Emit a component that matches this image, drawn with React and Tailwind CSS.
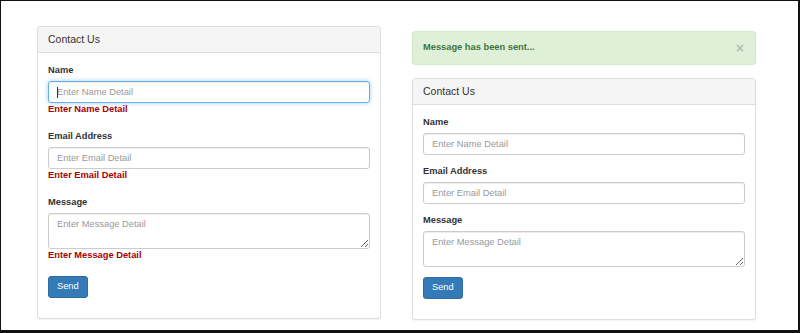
import React from 'react';

const font = { fontFamily: '"Liberation Sans", Arial, sans-serif' };

const Field = ({ label, placeholder, error, focused, multiline }) => (
  <div className={error ? 'mb-[14px]' : 'mb-[10px]'}>
    <label className="block text-[9.3px] leading-[13px] font-bold text-[#333] mb-[4px]">{label}</label>
    {multiline ? (
      <textarea
        placeholder={placeholder}
        className="block w-full h-[36px] px-[8px] py-[4px] text-[9.3px] leading-[13px] text-[#555] bg-white border border-[#ccc] rounded-[3px] shadow-[inset_0_1px_1px_rgba(0,0,0,0.075)] placeholder:text-[#999] outline-none"
      />
    ) : (
      <div className="relative">
        <input
          type="text"
          placeholder={placeholder}
          className={
            focused
              ? 'block w-full h-[22px] px-[8px] text-[9.3px] text-[#555] bg-white border border-[#66afe9] rounded-[3px] shadow-[inset_0_1px_1px_rgba(0,0,0,0.075),0_0_5px_rgba(102,175,233,0.6)] placeholder:text-[#999] outline-none'
              : 'block w-full h-[22px] px-[8px] text-[9.3px] text-[#555] bg-white border border-[#ccc] rounded-[3px] shadow-[inset_0_1px_1px_rgba(0,0,0,0.075)] placeholder:text-[#999] outline-none'
          }
        />
        {focused && <span className="absolute left-[9px] top-[6px] w-px h-[11px] bg-[#333]" />}
      </div>
    )}
    {error && <div className="text-[9.3px] leading-[13px] font-bold text-[#a80000]">{error}</div>}
  </div>
);

const ContactPanel = ({ errors }) => (
  <div className="w-[344px] bg-white border border-[#ddd] rounded-[3px] shadow-[0_1px_1px_rgba(0,0,0,0.05)]">
    <div className="h-[26px] px-[10px] flex items-center bg-[#f5f5f5] border-b border-[#ddd] rounded-t-[3px] text-[10.5px] text-[#333]">
      Contact Us
    </div>
    <div className="px-[10px] pt-[11px] pb-[20px]">
      <Field label="Name" placeholder="Enter Name Detail" error={errors && 'Enter Name Detail'} focused={errors} />
      <Field label="Email Address" placeholder="Enter Email Detail" error={errors && 'Enter Email Detail'} />
      <Field label="Message" placeholder="Enter Message Detail" error={errors && 'Enter Message Detail'} multiline />
      <button className="block h-[22px] px-[8px] text-[9.3px] leading-none text-white bg-[#337ab7] border border-[#2e6da4] rounded-[3px]">
        Send
      </button>
    </div>
  </div>
);

export default function App() {
  return (
    <div
      style={font}
      className="w-[800px] h-[333px] bg-white border-t border-l border-r-2 border-b-[3px] border-[#111] overflow-hidden"
    >
      <div className="flex items-start gap-[31px] pl-[36px] pt-[25px]">
        <ContactPanel errors />
        <div className="flex flex-col gap-[13px] pt-[5px]">
          <div className="w-[344px] h-[34px] flex items-center justify-between pl-[10px] pr-[11px] bg-[#dff0d8] border border-[#d6e9c6] rounded-[3px] text-[#3c763d]">
            <span className="text-[9.3px] font-bold">Message has been sent...</span>
            <span className="text-[14px] font-bold leading-none text-black opacity-20">×</span>
          </div>
          <ContactPanel />
        </div>
      </div>
    </div>
  );
}
